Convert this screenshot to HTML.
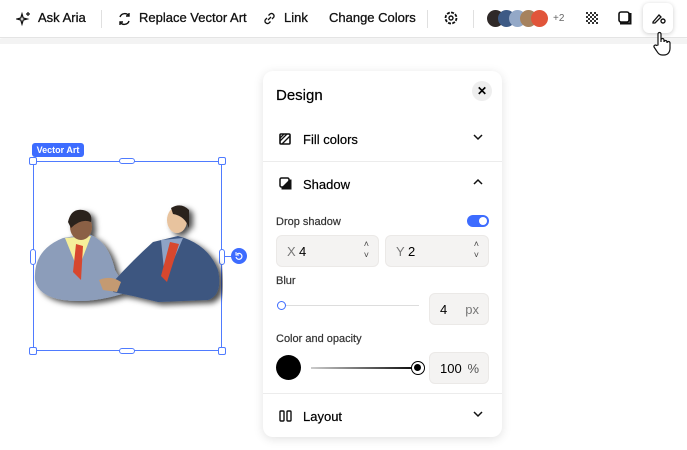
<!DOCTYPE html>
<html><head><meta charset="utf-8"><style>
*{box-sizing:border-box;margin:0;padding:0}
body{width:687px;height:450px;overflow:hidden;background:#fff;font-family:"Liberation Sans",sans-serif;position:relative;color:#000}
.tb{position:absolute;left:0;top:0;width:687px;height:38px;background:#fff;border-bottom:1px solid #e4e4e4;box-shadow:0 2px 3px rgba(0,0,0,.05)}
.band{position:absolute;left:0;top:39px;width:687px;height:5px;background:#f3f3f3}
.t{position:absolute;top:10px;font-size:13px;color:#111;white-space:nowrap;-webkit-text-stroke:0.3px #111}
.sep{position:absolute;top:10px;width:1px;height:18px;background:#e0e0e0}
.dot{position:absolute;top:10px;width:17px;height:17px;border-radius:50%}
.panel{position:absolute;left:263px;top:71px;width:239px;height:366px;background:#fff;border-radius:10px;box-shadow:0 2px 10px rgba(0,0,0,.12)}
.p{position:absolute;font-size:13px;-webkit-text-stroke:0.2px #000}
.hr{position:absolute;left:0;width:239px;height:1px;background:#ececec}
.inp{position:absolute;background:#f4f3f2;border:1px solid #ebe9e7;border-radius:6px;height:32px;font-size:13px}
.lab{position:absolute;font-size:11px;color:#333;-webkit-text-stroke:0.2px #333}
.h{position:absolute;width:8px;height:8px;background:#fff;border:1px solid #4f7bff;border-radius:2px}
</style></head><body>
<div class="tb"></div><div class="band"></div>
<svg style="position:absolute;left:16px;top:11px" width="16" height="16" viewBox="0 0 16 16"><path d="M6 3 L7.2 7 L11 8 L7.2 9 L6 13 L4.8 9 L1 8 L4.8 7Z" fill="none" stroke="#111" stroke-width="1.3"/><path d="M12 1v4M10 3h4" stroke="#111" stroke-width="1.2"/></svg>
<div class="t" style="left:38px">Ask Aria</div>
<div class="sep" style="left:101px"></div>
<svg style="position:absolute;left:117px;top:11px" width="15" height="16" viewBox="0 0 15 16"><path d="M3 6a5 5 0 0 1 9-1M12 10a5 5 0 0 1-9 1" fill="none" stroke="#111" stroke-width="1.4"/><path d="M12 2v3h-3M3 14v-3h3" fill="none" stroke="#111" stroke-width="1.4"/></svg>
<div class="t" style="left:139px">Replace Vector Art</div>
<svg style="position:absolute;left:262px;top:11px" width="15" height="15" viewBox="0 0 15 15"><path d="M6 9l3-3M5 7L3.5 8.5a2.5 2.5 0 0 0 3.5 3.5L8.5 10.5M10 8l1.5-1.5A2.5 2.5 0 0 0 8 3L6.5 4.5" fill="none" stroke="#111" stroke-width="1.3"/></svg>
<div class="t" style="left:284px">Link</div>
<div class="t" style="left:329px">Change Colors</div>
<div class="sep" style="left:427px"></div>
<svg style="position:absolute;left:443px;top:10px" width="16" height="16" viewBox="0 0 16 16"><circle cx="8" cy="8" r="5.5" fill="none" stroke="#111" stroke-width="1.8" stroke-dasharray="3 1.3"/><circle cx="8" cy="8" r="2" fill="none" stroke="#111" stroke-width="1.4"/></svg>
<div class="sep" style="left:473px"></div>
<div class="dot" style="left:487px;background:#2f2928"></div>
<div class="dot" style="left:498px;background:#3d5a85"></div>
<div class="dot" style="left:509px;background:#93a8c7"></div>
<div class="dot" style="left:520px;background:#a6825e"></div>
<div class="dot" style="left:531px;background:#e1553a"></div>
<div class="t" style="left:553px;font-size:10px;top:13px;color:#666;-webkit-text-stroke:0">+2</div>
<svg style="position:absolute;left:586px;top:12px" width="12" height="12" viewBox="0 0 12 12"><g fill="#333"><rect x="0" y="0" width="2" height="2"/><rect x="4" y="0" width="2" height="2"/><rect x="8" y="0" width="2" height="2"/><rect x="2" y="2" width="2" height="2"/><rect x="6" y="2" width="2" height="2"/><rect x="10" y="2" width="2" height="2"/><rect x="0" y="4" width="2" height="2"/><rect x="4" y="4" width="2" height="2"/><rect x="8" y="4" width="2" height="2"/><rect x="2" y="6" width="2" height="2"/><rect x="6" y="6" width="2" height="2"/><rect x="10" y="6" width="2" height="2"/><rect x="0" y="8" width="2" height="2"/><rect x="4" y="8" width="2" height="2"/><rect x="8" y="8" width="2" height="2"/><rect x="2" y="10" width="2" height="2"/><rect x="6" y="10" width="2" height="2"/><rect x="10" y="10" width="2" height="2"/></g></svg>
<svg style="position:absolute;left:618px;top:11px" width="14" height="14" viewBox="0 0 14 14"><rect x="1" y="1" width="10" height="10" rx="2" fill="none" stroke="#111" stroke-width="1.6"/><path d="M11 3h1.5v9.5H3V11" fill="none" stroke="#111" stroke-width="2"/></svg>
<div style="position:absolute;left:643px;top:3px;width:30px;height:30px;background:#fff;border-radius:6px;box-shadow:0 1px 5px rgba(0,0,0,.2)"></div>
<svg style="position:absolute;left:651px;top:11px" width="16" height="14" viewBox="0 0 16 14"><path d="M2 11l6-7 2 2-6 6H2z" fill="none" stroke="#111" stroke-width="1.3"/><circle cx="12" cy="10" r="2" fill="none" stroke="#111" stroke-width="1.4"/></svg>
<svg style="position:absolute;left:651px;top:31px" width="22" height="26" viewBox="0 0 22 26"><path d="M7 14V3a1.5 1.5 0 0 1 3 0v8V9a1.5 1.5 0 0 1 3 0v2a1.5 1.5 0 0 1 3 0v1a1.5 1.5 0 0 1 3 0v5c0 4-2 7-6 7h-2c-3 0-4-2-6-5l-2-3a1.5 1.5 0 0 1 2.5-1.5z" fill="#fff" stroke="#111" stroke-width="1.2"/></svg>

<div style="position:absolute;left:32px;top:143px;width:52px;height:14px;background:#3d6cff;border-radius:3px;color:#fff;font-size:9px;font-weight:bold;text-align:center;line-height:14px">Vector Art</div>
<div style="position:absolute;left:33px;top:161px;width:189px;height:190px;border:1px solid #4f7bff"></div>
<div class="h" style="left:29px;top:157px"></div><div class="h" style="left:218px;top:157px"></div>
<div class="h" style="left:29px;top:347px"></div><div class="h" style="left:218px;top:347px"></div>
<div class="h" style="left:119px;top:158px;width:16px;height:6px;border-radius:3px"></div>
<div class="h" style="left:119px;top:348px;width:16px;height:6px;border-radius:3px"></div>
<div class="h" style="left:30px;top:249px;width:6px;height:16px;border-radius:3px"></div>
<div class="h" style="left:219px;top:249px;width:6px;height:16px;border-radius:3px"></div>
<div style="position:absolute;left:224px;top:256px;width:8px;height:1px;background:#4f7bff"></div>
<div style="position:absolute;left:231px;top:248px;width:16px;height:16px;border-radius:50%;background:#3d6cff"></div>
<svg style="position:absolute;left:235px;top:252px" width="8" height="8" viewBox="0 0 8 8"><path d="M2 2a3 3 0 1 1-1 3" fill="none" stroke="#fff" stroke-width="1.2"/><path d="M1 0v3h3" fill="none" stroke="#fff" stroke-width="1"/></svg>
<svg style="position:absolute;left:33px;top:200px" width="190" height="110" viewBox="0 0 190 110">
<defs><filter id="s"><feDropShadow dx="4" dy="3" stdDeviation="3" flood-opacity=".7"/></filter></defs>
<g filter="url(#s)">
<path d="M2 80 Q0 50 30 38 L55 34 Q75 40 82 70 L95 92 Q60 104 30 100 Q5 96 2 80Z" fill="#8c9dba"/>
<path d="M32 38 L45 70 L58 36Z" fill="#f5ef9a"/>
<path d="M43 44 L40 72 L48 80 L50 46Z" fill="#d7472d"/>
<ellipse cx="48" cy="27" rx="11" ry="13" fill="#8b6145"/>
<path d="M35 22 Q38 8 50 10 Q60 12 58 22 Q48 18 38 28Z" fill="#2b201c"/>
<path d="M80 82 Q100 60 120 42 L145 36 Q175 44 185 70 Q190 95 175 100 L125 102 L100 96 L80 92Z" fill="#3c5680"/>
<path d="M128 40 L132 80 L150 38Z" fill="#8ea3c6"/>
<path d="M137 42 L128 76 L134 82 L146 44Z" fill="#d7472d"/>
<ellipse cx="144" cy="20" rx="10" ry="13" fill="#e8c39e"/>
<path d="M138 8 Q148 2 156 10 L156 28 Q152 16 140 14Z" fill="#2b201c"/>
<path d="M66 80 Q78 75 88 82 L84 92 L70 90Z" fill="#c49a72"/>
</g></svg>

<div class="panel">
<div class="p" style="left:13px;top:16px;font-size:15px">Design</div>
<div style="position:absolute;left:209px;top:10px;width:20px;height:20px;border-radius:50%;background:#eee;text-align:center;line-height:20px;font-size:12px;font-weight:bold">✕</div>
<svg style="position:absolute;left:16px;top:62px" width="12" height="12" viewBox="0 0 12 12"><rect x="1" y="1" width="10" height="10" rx="1" fill="none" stroke="#111" stroke-width="1.6"/><path d="M1 8L8 1M3 11L11 3M1 5L5 1" stroke="#111" stroke-width="1.3"/></svg>
<div class="p" style="left:40px;top:61px">Fill colors</div>
<svg style="position:absolute;left:210px;top:62px" width="10" height="8" viewBox="0 0 10 8"><path d="M1 2l4 4 4-4" fill="none" stroke="#111" stroke-width="1.5"/></svg>
<div class="hr" style="top:90px"></div>
<svg style="position:absolute;left:16px;top:106px" width="13" height="13" viewBox="0 0 13 13"><rect x="1" y="1" width="9" height="9" rx="1.5" fill="none" stroke="#111" stroke-width="1.5"/><path d="M10 3h2v9H3v-2" fill="#111" stroke="#111" stroke-width="1"/></svg>
<div class="p" style="left:40px;top:106px">Shadow</div>
<svg style="position:absolute;left:210px;top:107px" width="10" height="8" viewBox="0 0 10 8"><path d="M1 6l4-4 4 4" fill="none" stroke="#111" stroke-width="1.5"/></svg>
<div class="lab" style="left:13px;top:145px">Drop shadow</div>
<div style="position:absolute;left:204px;top:144px;width:22px;height:12px;border-radius:6px;background:#3d6cff"><div style="position:absolute;right:2px;top:2px;width:8px;height:8px;border-radius:50%;background:#fff"></div></div>
<div class="inp" style="left:13px;top:164px;width:103px"><span style="position:absolute;left:10px;top:8px;color:#777">X</span><span style="position:absolute;left:22px;top:8px">4</span><span style="position:absolute;right:9px;top:3px;font-size:9px;line-height:11px;color:#444">˄<br>˅</span></div>
<div class="inp" style="left:122px;top:164px;width:104px"><span style="position:absolute;left:10px;top:8px;color:#777">Y</span><span style="position:absolute;left:22px;top:8px">2</span><span style="position:absolute;right:9px;top:3px;font-size:9px;line-height:11px;color:#444">˄<br>˅</span></div>
<div class="lab" style="left:13px;top:204px">Blur</div>
<div style="position:absolute;left:18px;top:234px;width:138px;height:1px;background:#ddd"></div>
<div style="position:absolute;left:14px;top:230px;width:9px;height:9px;border-radius:50%;border:1.5px solid #3d6cff;background:#fff"></div>
<div class="inp" style="left:166px;top:222px;width:60px"><span style="position:absolute;left:10px;top:8px">4</span><span style="position:absolute;right:9px;top:8px;color:#777">px</span></div>
<div class="lab" style="left:13px;top:262px">Color and opacity</div>
<div style="position:absolute;left:13px;top:284px;width:25px;height:25px;border-radius:50%;background:#000"></div>
<div style="position:absolute;left:48px;top:296px;width:110px;height:2px;background:linear-gradient(90deg,#ccc,#000)"></div>
<div style="position:absolute;left:148px;top:290px;width:14px;height:14px;border-radius:50%;border:1.5px solid #000;background:#fff"><div style="position:absolute;left:2px;top:2px;width:7px;height:7px;border-radius:50%;background:#000"></div></div>
<div class="inp" style="left:166px;top:281px;width:60px"><span style="position:absolute;left:10px;top:8px">100</span><span style="position:absolute;right:9px;top:8px;color:#555">%</span></div>
<div class="hr" style="top:322px"></div>
<svg style="position:absolute;left:16px;top:339px" width="13" height="12" viewBox="0 0 13 12"><rect x="1" y="1" width="4" height="10" rx="1" fill="none" stroke="#111" stroke-width="1.4"/><rect x="8" y="1" width="4" height="10" rx="1" fill="none" stroke="#111" stroke-width="1.4"/></svg>
<div class="p" style="left:40px;top:338px">Layout</div>
<svg style="position:absolute;left:210px;top:339px" width="10" height="8" viewBox="0 0 10 8"><path d="M1 2l4 4 4-4" fill="none" stroke="#111" stroke-width="1.5"/></svg>
</div>
</body></html>
